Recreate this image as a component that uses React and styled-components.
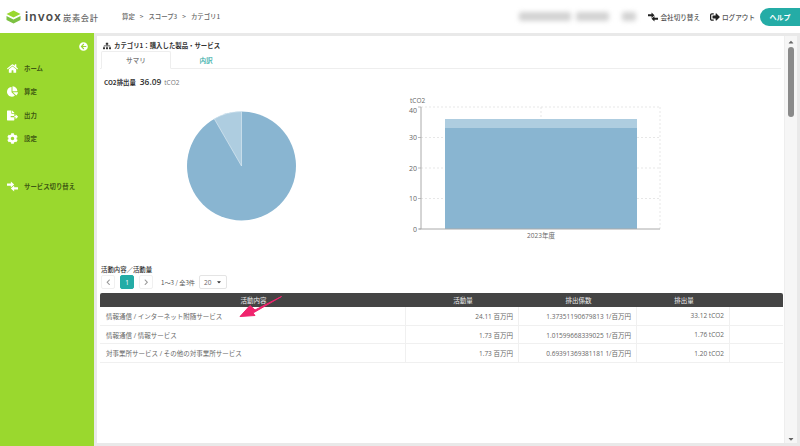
import React from "react";
import styled, { createGlobalStyle } from "styled-components";
import { FaHome, FaChartPie, FaFileExport, FaCog, FaArrowCircleLeft, FaSitemap, FaSignOutAlt, FaChevronLeft, FaChevronRight, FaCaretDown, FaCaretUp } from "react-icons/fa";

const Global = createGlobalStyle`
  html, body { margin: 0; padding: 0; background: #e9e9e9; }
  body { font-family: "Noto Sans CJK JP", "Noto Sans", sans-serif; color: #444; }
  * { box-sizing: border-box; }
`;
const Page = styled.div`width: 800px; height: 446px; overflow: hidden; display: flex; flex-direction: column; position: relative;`;
const Header = styled.header`height: 33px; background: #fff; display: flex; align-items: center; padding-left: 6px; flex: none;`;
const LogoMark = styled.svg`width: 15px; height: 14px; margin-right: 4px; flex: none;`;
const LogoWord = styled.span`font-family: "Inter", "Liberation Sans", sans-serif; font-weight: 600; font-size: 12px; letter-spacing: 1.2px; color: #4a4a4a; width: 38px;`;
const LogoSub = styled.span`font-size: 8.2px; font-weight: 500; color: #666; letter-spacing: .7px; width: 59px;`;
const Crumbs = styled.nav`display: flex; gap: 5px; font-size: 6.4px; color: #666; font-weight: 500; align-items: center;`;
const Spacer = styled.div`flex: 1;`;
const Blurred = styled.div`display: flex; margin-right: 12px; filter: blur(2.5px);`;
const BlurBar = styled.div`height: 9px; width: ${p => p.$w}px; margin-right: ${p => p.$mr || 0}px; background: #d2d2d2; border-radius: 2px;`;
const HeadLink = styled.div`display: flex; align-items: center; gap: 2px; font-size: 6.6px; font-weight: 500; color: #555; margin-right: ${p => p.$mr}px; svg { color: #222; font-size: 10px; width: 10px; flex: none; }`;
const HelpButton = styled.div`width: 40px; height: 18px; background: #24aca6; color: #fff; font-size: 7px; font-weight: 700; display: flex; align-items: center; justify-content: center; border-radius: 9px 0 0 9px;`;
const Body = styled.div`flex: 1; display: flex; min-height: 0;`;
const Side = styled.aside`width: 94px; background: #9ad82e; flex: none; padding-top: 9px; display: flex; flex-direction: column;`;
const Collapse = styled.div`height: 9px; display: flex; justify-content: flex-end; padding-right: 6px; color: #fff; font-size: 9px; margin-bottom: 6px;`;
const NavItem = styled.div`height: 23.3px; display: flex; align-items: center; padding-left: 7px; gap: 6px; font-size: 6.4px; font-weight: 700; color: #3f5a12; margin-bottom: ${p => p.$mb || 0}px; svg { color: #fff; font-size: 11px; width: 11px; flex: none; }`;
const Main = styled.main`flex: 1; margin: 3px; background: #fff; display: flex; min-width: 0;`;
const Content = styled.div`flex: 1; min-width: 0; padding: 4px 0 0 3px; display: flex; flex-direction: column;`;
const Scrollbar = styled.div`width: 13px; background: #f6f6f6; border-left: 1px solid #eee; flex: none; display: flex; flex-direction: column; align-items: center; color: #666; font-size: 8px; padding: 2px 0 0;`;
const Thumb = styled.div`width: 6px; height: 70px; background: #8a8a8a; border-radius: 3px; margin-top: 1px; margin-bottom: auto;`;
const Title = styled.div`display: flex; align-items: center; gap: 3px; font-size: 6.4px; font-weight: 700; color: #333; height: 11px; padding-left: 3px; svg { font-size: 8px; }`;
const TabRow = styled.div`display: flex; height: 18px; border-bottom: 1px solid #eee; margin-right: 3px; padding-left: 1px;`;
const Tab = styled.div`width: 70px; display: flex; align-items: center; justify-content: center; font-size: 6.6px; font-weight: 500; color: ${p => p.$active ? "#777" : "#2aa9a3"}; ${p => p.$active ? "border: 1px solid #eee; border-bottom: 1px solid #fff; border-radius: 2px 2px 0 0; height: 18px;" : ""}`;
const Metric = styled.div`display: flex; align-items: baseline; height: 14px; margin-top: 7px; padding-left: 4px; font-size: 6.4px; font-weight: 700; color: #333; flex: none;`;
const MetricValue = styled.span`font-family: "Open Sans", sans-serif; font-size: 8.4px; font-weight: 600; margin: 0 3px 0 4px;`;
const MetricUnit = styled.span`font-family: "Open Sans", sans-serif; font-size: 6.5px; font-weight: 400; color: #777;`;
const Charts = styled.div`height: 172px; flex: none;`;
const ChartSvg = styled.svg`display: block; width: 681px; height: 172px;`;
const SectionTitle = styled.div`font-size: 6.4px; font-weight: 500; color: #333; height: 9px; line-height: 9px; padding-left: 1px; margin-top: 3px;`;
const Pager = styled.div`display: flex; align-items: center; height: 16px; padding-left: 1px; margin: 0 0 2.5px;`;
const PageBtn = styled.div`width: 14px; height: 14px; border-radius: 2px; margin-right: 5px; display: flex; align-items: center; justify-content: center; font-size: 6.5px; font-family: "Open Sans", sans-serif; background: ${p => p.$on ? "#24aca6" : "#fff"}; color: ${p => p.$on ? "#fff" : "#999"}; border: 1px solid ${p => p.$on ? "#24aca6" : "#f0f0f0"};`;
const PageInfo = styled.div`font-size: 6.2px; color: #555; margin: 0 3px 0 3px; width: 35px; white-space: nowrap;`;
const PageSelect = styled.div`width: 28px; height: 14px; border: 1px solid #e4e4e4; border-radius: 2px; display: flex; align-items: center; justify-content: space-between; padding: 0 4px; font-family: "Open Sans", sans-serif; font-size: 6.5px; color: #666; svg { font-size: 6px; color: #333; }`;
const Table = styled.div`width: 683px; flex: none;`;
const Row = styled.div`display: grid; grid-template-columns: 306px 113px 118px 93px 53px; height: ${p => p.$head ? 14.5 : 18.7}px; background: ${p => p.$head ? "#444" : "#fff"}; border-bottom: ${p => p.$head ? "none" : "1px solid #f0f0f0"}; border-radius: ${p => p.$head ? "2px 2px 0 0" : 0};`;
const Cell = styled.div`display: flex; align-items: center; padding: 0 5px 0 6px; font-size: 6.5px; justify-content: ${p => p.$align || "flex-start"}; color: ${p => p.$head ? "#eee" : "#666"}; border-right: ${p => p.$head || p.$last ? "none" : "1px solid #f0f0f0"}; font-family: "Open Sans", "Noto Sans CJK JP", sans-serif; white-space: nowrap;`;
const Arrow = styled.svg`position: absolute; left: 238px; top: 295px; width: 45px; height: 24px;`;

const BLUE = "#89b5d1";
const LIGHT = "#aecde0";

const rows = [
  ["情報通信 / インターネット附随サービス", "24.11 百万円", "1.37351190679813 1/百万円", "33.12 tCO2"],
  ["情報通信 / 情報サービス", "1.73 百万円", "1.01599668339025 1/百万円", "1.76 tCO2"],
  ["対事業所サービス / その他の対事業所サービス", "1.73 百万円", "0.69391369381181 1/百万円", "1.20 tCO2"],
];

const SwapIcon = () => (
  <svg viewBox="0 0 20 20" fill="currentColor">
    <path d="M0 4.5 H7 V1 L13 6.5 L7 12 V8.5 H0 Z" />
    <path d="M20 11.5 H13 V8 L7 13.5 L13 19 V15.5 H20 Z" />
  </svg>
);

const nav = [
  [FaHome, "ホーム"], [FaChartPie, "算定"], [FaFileExport, "出力"], [FaCog, "設定"],
];

function ChartArea() {
  // svg origin = page (100, 90)
  const cx = 141.5, cy = 76, r = 54.5;
  const a = -30 * Math.PI / 180;
  const px = cx + r * Math.sin(a), py = cy - r * Math.cos(a);
  const x0 = 321, x1 = 560, y0 = 139, yTop = 17;
  const ticks = [0, 10, 20, 30, 40];
  const yOf = v => y0 - (v / 40) * (y0 - yTop);
  return (
    <ChartSvg viewBox="0 0 681 172">
      <circle cx={cx} cy={cy} r={r} fill={BLUE} />
      <path d={`M${cx} ${cy} L${px} ${py} A${r} ${r} 0 0 1 ${cx} ${cy - r} Z`} fill={LIGHT} stroke="#e6f0f6" strokeWidth=".6" />
      {ticks.slice(1).map(t => <line key={t} x1={x0} x2={x1} y1={yOf(t)} y2={yOf(t)} stroke="#ddd" strokeWidth=".7" strokeDasharray="2 2" />)}
      <line x1={x1} x2={x1} y1={yTop} y2={y0} stroke="#ddd" strokeWidth=".7" strokeDasharray="2 2" />
      <line x1={441} x2={441} y1={yTop} y2={y0} stroke="#ddd" strokeWidth=".7" strokeDasharray="2 2" />
      <rect x={345} y={29} width={192} height={9} fill={LIGHT} />
      <rect x={345} y={38} width={192} height={101} fill={BLUE} />
      <line x1={x0} x2={x0} y1={yTop} y2={y0} stroke="#aaa" strokeWidth="1" />
      <line x1={x0 - 2} x2={x1} y1={y0} y2={y0} stroke="#aaa" strokeWidth="1" />
      {ticks.map(t => (
        <g key={t}>
          <line x1={x0 - 3} x2={x0} y1={yOf(t)} y2={yOf(t)} stroke="#aaa" strokeWidth=".8" />
          <text x={x0 - 4} y={yOf(t) + (t === 40 ? 5.5 : 2.5)} textAnchor="end" fontSize="7" fill="#666" fontFamily="Open Sans, sans-serif">{t}</text>
        </g>
      ))}
      <text x={310} y={12.5} fontSize="6.5" fill="#666" fontFamily="Open Sans, sans-serif">tCO2</text>
      <text x={441} y={148} textAnchor="middle" fontSize="6.5" fill="#666" fontFamily="Open Sans, Noto Sans CJK JP, sans-serif">2023年度</text>
    </ChartSvg>
  );
}

export default function App() {
  return (
    <Page>
      <Global />
      <Header>
        <LogoMark viewBox="0 0 15 14">
          <path d="M7.5 0.5 L14.5 4 L7.5 7.5 L0.5 4 Z" fill="#9ad82e" />
          <path d="M0.5 6 L7.5 9.5 L14.5 6 L14.5 10 L7.5 13.5 L0.5 10 Z" fill="#7cc142" />
        </LogoMark>
        <LogoWord>invox</LogoWord>
        <LogoSub>炭素会計</LogoSub>
        <Crumbs><span>算定</span><span>&gt;</span><span>スコープ3</span><span>&gt;</span><span>カテゴリ1</span></Crumbs>
        <Spacer />
        <Blurred><BlurBar $w={52} $mr={5} /><BlurBar $w={33} $mr={13} /><BlurBar $w={14} /></Blurred>
        <HeadLink $mr={10}><SwapIcon /><span>会社切り替え</span></HeadLink>
        <HeadLink $mr={5}><FaSignOutAlt /><span>ログアウト</span></HeadLink>
        <HelpButton>ヘルプ</HelpButton>
      </Header>
      <Body>
        <Side>
          <Collapse><FaArrowCircleLeft /></Collapse>
          {nav.map(([I, t], i) => <NavItem key={t} $mb={i === 3 ? 25 : 0}><I /><span>{t}</span></NavItem>)}
          <NavItem><SwapIcon /><span>サービス切り替え</span></NavItem>
        </Side>
        <Main>
          <Content>
            <Title><FaSitemap /><span>カテゴリ1：購入した製品・サービス</span></Title>
            <TabRow><Tab $active>サマリ</Tab><Tab>内訳</Tab></TabRow>
            <Metric>CO2排出量<MetricValue>36.09</MetricValue><MetricUnit>tCO2</MetricUnit></Metric>
            <Charts><ChartArea /></Charts>
            <SectionTitle>活動内容／活動量</SectionTitle>
            <Pager>
              <PageBtn><FaChevronLeft /></PageBtn>
              <PageBtn $on>1</PageBtn>
              <PageBtn><FaChevronRight /></PageBtn>
              <PageInfo>1〜3 / 全3件</PageInfo>
              <PageSelect>20<FaCaretDown /></PageSelect>
            </Pager>
            <Table>
              <Row $head>
                <Cell $head $align="center">活動内容</Cell>
                <Cell $head $align="center">活動量</Cell>
                <Cell $head $align="center">排出係数</Cell>
                <Cell $head $align="center">排出量</Cell>
                <Cell $head />
              </Row>
              {rows.map(r => (
                <Row key={r[0]}>
                  <Cell>{r[0]}</Cell>
                  <Cell $align="flex-end">{r[1]}</Cell>
                  <Cell $align="flex-end">{r[2]}</Cell>
                  <Cell $align="flex-end">{r[3]}</Cell>
                  <Cell $last />
                </Row>
              ))}
            </Table>
          </Content>
          <Scrollbar><FaCaretUp /><Thumb /><FaCaretDown /></Scrollbar>
        </Main>
      </Body>
      <Arrow viewBox="0 0 45 24">
        <path d="M43.5 1.5 L17 15 L12 10.5 L2 21.5 L17 20.5 L15 18 Z" fill="#f0246e" stroke="#f0246e" strokeWidth="1" strokeLinejoin="round" />
      </Arrow>
    </Page>
  );
}
